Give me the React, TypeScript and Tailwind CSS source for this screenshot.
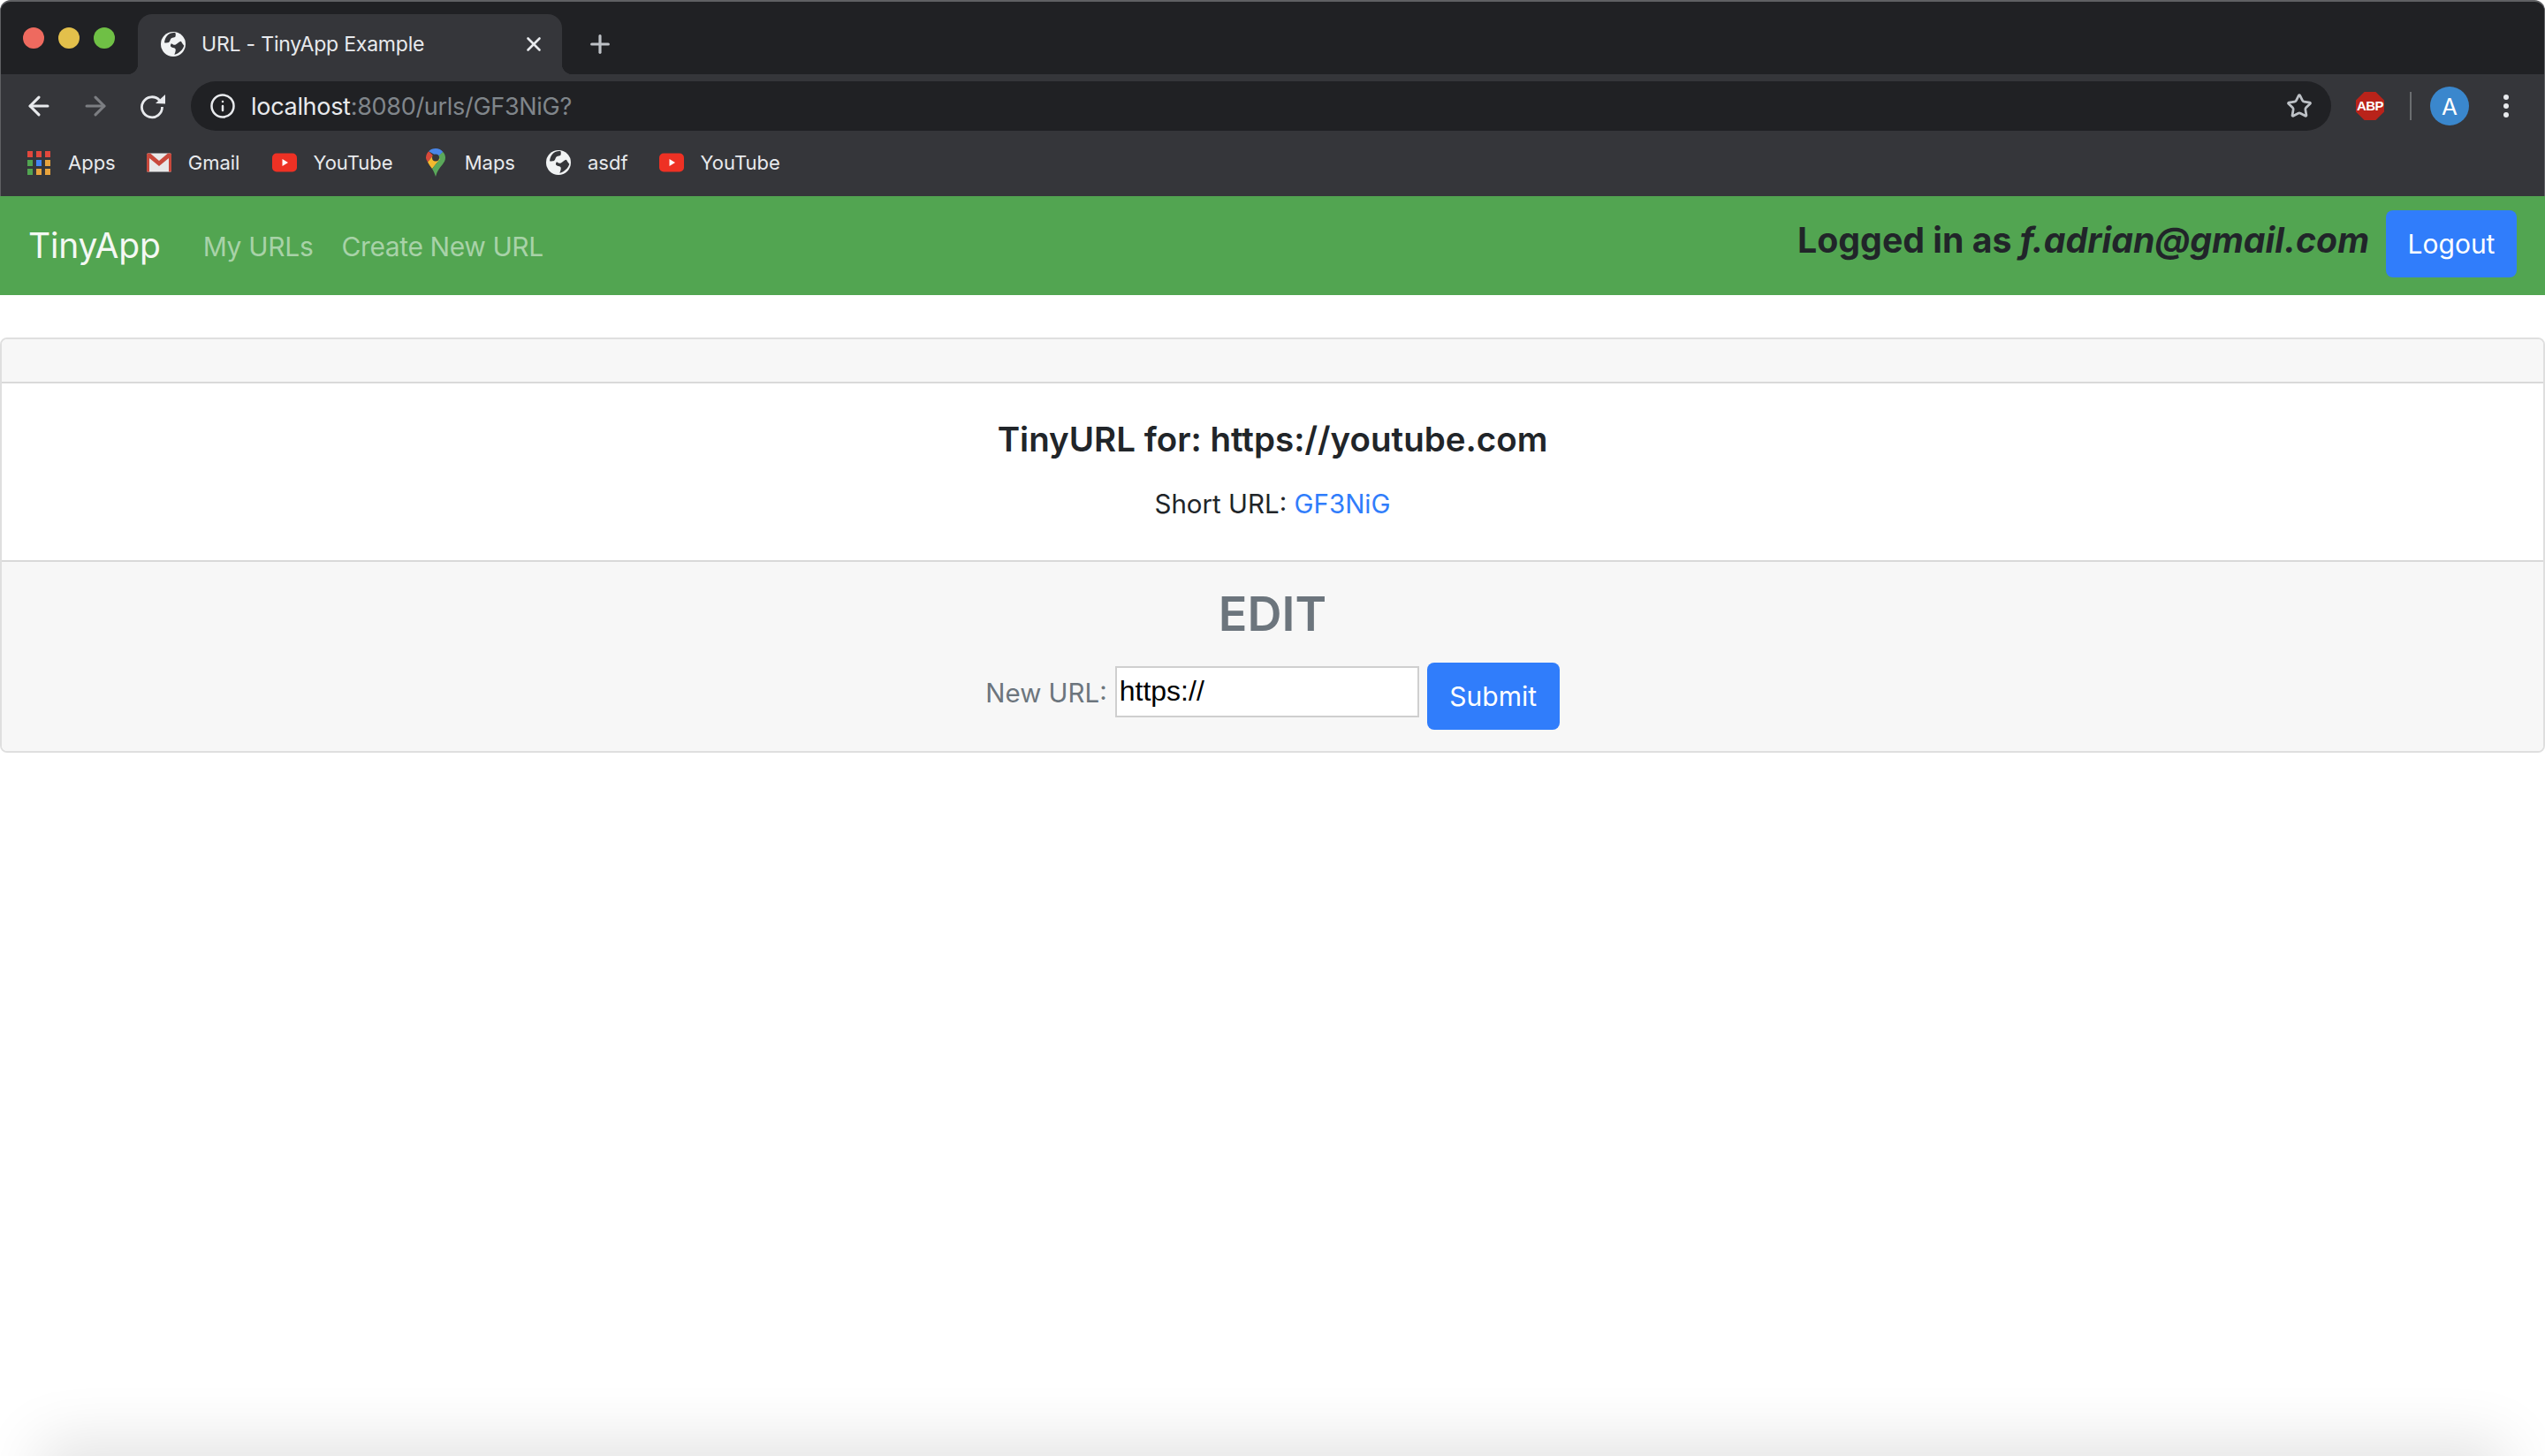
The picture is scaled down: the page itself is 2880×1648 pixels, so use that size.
import React from 'react';
import { ArrowLeft, ArrowRight, Info, Star, X, Plus } from 'lucide-react';

const Globe = () => (
  <svg width="28" height="28" viewBox="0 0 28 28" className="shrink-0">
    <circle cx="14" cy="14" r="14" fill="#f1f3f4" />
    <path d="M16.500 1.200C13 .6 10 1.800 8 3.400 5.800 5.500 4.300 8.500 4 12.300c2.300.4 4.800.2 5.700-1 1-1.500 1-3 2.300-4 1.200-.9 3.200-.6 4.300-1.600.6-1.200.6-3 .2-4.500z" fill="#35363a" />
    <path d="M23 10.700c-2.500.2-4.500 2.800-6.700 4-1.500.5-3-.5-4.300-1.400-1 1-1.300 2.500-.7 3.400 1.200 1.300 3.500 1 5 2.300 1 1.200.3 4.200-1 6.700 2-.3 3.500-.9 4.400-1.700 3.200-2 5.500-5 6.600-8.300-1.200-1.700-2.700-3.500-3.300-5z" fill="#35363a" />
  </svg>
);

const ReloadIcon = () => (
  <svg width="30" height="30" viewBox="0 0 30 30" className="shrink-0 text-[#e8eaed]">
    <path d="M22.500 8.500A11.500 11.500 0 1 0 25.500 16" fill="none" stroke="currentColor" strokeWidth="2.800" />
    <path d="M29 2v10.500L18 12z" fill="currentColor" />
  </svg>
);

const YouTubeIcon = () => (
  <svg width="28" height="22" viewBox="0 0 28 22" className="shrink-0">
    <rect width="28" height="21" y="0.500" rx="5" fill="#ee3124" />
    <path d="M11.500 7l6.500 4-6.500 4z" fill="#fff" />
  </svg>
);

const GmailIcon = () => (
  <svg width="28" height="22" viewBox="0 0 28 22" className="shrink-0">
    <rect width="28" height="21" y="0.500" rx="1.500" fill="#e8e8e8" />
    <path d="M0 2c0-1 .7-1.500 1.500-1.500H4L14 9 24 .5h2.500C27.300.5 28 1 28 2v18c0 1-.7 1.500-1.500 1.500H25V6l-11 9L3 6v15.500H1.500C.7 21.500 0 21 0 20z" fill="#c8493c" />
  </svg>
);

const MapsIcon = () => (
  <svg width="22" height="32" viewBox="0 0 22 32" className="shrink-0">
    <path d="M3.200 3.200L8 8l-6 7.500C.6 13 0 11.500 0 10.500 0 7.500 1.200 5 3.200 3.200z" fill="#d8493a" />
    <path d="M3.200 3.200C5.200 1.200 8 0 11 0c3.500 0 6.300 1.500 8.300 4L14 9.500 8 6z" fill="#4a86e8" />
    <path d="M19.300 4C21 6 22 8 22 10.500c0 3-1.500 5.500-3.500 8L9 13z" fill="#5aa85a" />
    <path d="M2 15.500L8 8l8 4-9 11c-2-2.700-3.800-5-5-7.500z" fill="#f3b92f" />
    <path d="M18.500 18.500C15.500 22 12.500 26 11 32c-1-3.500-2.300-6.300-4-9l8-10z" fill="#5aa85a" />
    <circle cx="11" cy="10.500" r="4" fill="#35363a" />
  </svg>
);

const AppsIcon = () => {
  const cells = ['#e2483d', '#e2483d', '#e2483d', '#52a551', '#4285f4', '#e8a33d', '#52a551', '#e8a33d', '#e8a33d'];
  return (
    <svg width="26" height="27" viewBox="0 0 26 27" className="shrink-0">
      {cells.map((c, i) => (
        <rect key={i} x={(i % 3) * 10} y={Math.floor(i / 3) * 10} width="6" height="7" fill={c} />
      ))}
    </svg>
  );
};

const AbpIcon = () => (
  <div
    className="w-8 h-8 bg-[#b9231a] flex items-center justify-center text-white text-[15px] font-bold tracking-[-0.5px] [font-family:'Liberation_Sans',sans-serif] [clip-path:polygon(30%_0,70%_0,100%_30%,100%_70%,70%_100%,30%_100%,0_70%,0_30%)]"
  >
    ABP
  </div>
);

const Bookmark = ({ icon, label, gap, after }: { icon: React.ReactNode; label: string; gap: string; after: string }) => (
  <div className={`flex items-center ${gap} ${after}`}>
    {icon}
    <span className="text-[22px] leading-none text-[#e8eaed]">{label}</span>
  </div>
);

export default function App() {
  return (
    <div className="relative w-[2880px] h-[1648px] overflow-hidden bg-white [font-family:Inter,'Liberation_Sans',sans-serif]">
      {/* browser chrome */}
      <div className="h-[222px] rounded-t-[12px] bg-[#35363a] border-t-2 border-x border-[#5f6063] overflow-hidden">
        <div className="h-[82px] bg-[#202124] flex items-start">
          <div className="w-[155px] h-full flex items-center gap-[16px] pl-[25px]">
            <div className="w-6 h-6 rounded-full bg-[#ee6a5f]" />
            <div className="w-6 h-6 rounded-full bg-[#e3c04b]" />
            <div className="w-6 h-6 rounded-full bg-[#6fc045]" />
          </div>
          <div className="relative mt-[14px] w-[480px] h-[68px] rounded-t-[16px] bg-[#35363a] flex items-center pl-[26px] pr-[19px]">
            <Globe />
            <span className="ml-[18px] text-[23px] text-[#e8eaed] leading-none tracking-[-0.2px] flex-1">URL - TinyApp Example</span>
            <X size={26} strokeWidth={2.400} className="text-[#e8eaed]" />
            <div className="absolute -left-[12px] bottom-0 w-[12px] h-[12px] bg-[radial-gradient(circle_at_0_0,#202124_12px,#35363a_12.500px)]" />
            <div className="absolute -right-[12px] bottom-0 w-[12px] h-[12px] bg-[radial-gradient(circle_at_100%_0,#202124_12px,#35363a_12.500px)]" />
          </div>
          <Plus size={32} strokeWidth={2.400} className="ml-[27px] mt-[32px] text-[#bdc1c6]" />
        </div>
        <div className="h-[72px] flex items-center pl-[26px] pr-[30px]">
          <ArrowLeft size={34} strokeWidth={2.200} className="text-[#e8eaed]" />
          <ArrowRight size={34} strokeWidth={2.200} className="ml-[30px] text-[#7c7e82]" />
          <div className="ml-[33px]"><ReloadIcon /></div>
          <div className="ml-[28px] w-[2422px] h-[56px] rounded-full bg-[#202124] flex items-center pl-[21px] pr-[21px]">
            <Info size={30} strokeWidth={2} className="text-[#e8eaed]" />
            <span className="ml-[17px] text-[27px] leading-none text-[#e8eaed] flex-1 tracking-[-0.3px]">
              localhost<span className="text-[#80868b]">:8080/urls/GF3NiG?</span>
            </span>
            <Star size={30} strokeWidth={2.200} className="text-[#bdc1c6]" />
          </div>
          <div className="ml-[28px]"><AbpIcon /></div>
          <div className="ml-[29px] w-[2px] h-8 bg-[#6b6d70]" />
          <div className="ml-[21px] w-11 h-11 rounded-full bg-[#3a87cd] flex items-center justify-center text-white text-[26px]">A</div>
          <div className="ml-[39px] flex flex-col gap-1">
            <div className="w-[6px] h-[6px] rounded-full bg-[#e8eaed]" />
            <div className="w-[6px] h-[6px] rounded-full bg-[#e8eaed]" />
            <div className="w-[6px] h-[6px] rounded-full bg-[#e8eaed]" />
          </div>
        </div>
        <div className="h-[66px] flex items-center pl-[30px] pb-[10px]">
          <Bookmark icon={<AppsIcon />} label="Apps" gap="gap-[20px]" after="mr-[35px]" />
          <Bookmark icon={<GmailIcon />} label="Gmail" gap="gap-[19px]" after="mr-[37px]" />
          <Bookmark icon={<YouTubeIcon />} label="YouTube" gap="gap-[18px]" after="mr-[37px]" />
          <Bookmark icon={<MapsIcon />} label="Maps" gap="gap-[22px]" after="mr-[35px]" />
          <Bookmark icon={<Globe />} label="asdf" gap="gap-[19px]" after="mr-[35px]" />
          <Bookmark icon={<YouTubeIcon />} label="YouTube" gap="gap-[19px]" after="" />
        </div>
      </div>

      {/* navbar */}
      <nav className="h-[112px] bg-[#52a551] flex items-center pl-[32px] pr-[32px]">
        <span className="text-[39px] text-[#f4f8f3] tracking-[-0.2px]">TinyApp</span>
        <span className="ml-[48px] mt-[2px] text-[30px] text-[#a8d2a8] tracking-[-0.3px]">My URLs</span>
        <span className="ml-[32px] mt-[2px] text-[30px] text-[#a8d2a8] tracking-[-0.4px]">Create New URL</span>
        <span className="ml-auto mb-[12px] text-[39.250px] font-bold text-[#212529]">
          Logged in as <em>f.adrian@gmail.com</em>
        </span>
        <button className="ml-[19px] mb-[4px] w-[148px] h-[76px] rounded-[8px] bg-[#307dfb] text-white text-[30px]">Logout</button>
      </nav>

      {/* card */}
      <div className="mt-[48px] rounded-[8px] border-2 border-[#dfdfdf]">
        <div className="h-[50px] bg-[#f7f7f7] rounded-t-[6px] border-b-2 border-[#d9d9d9]" />
        <div className="h-[200px] flex flex-col items-center pt-[39px] text-[#212529]">
          <h2 className="text-[38.500px] leading-[48px] font-semibold">TinyURL for: https://youtube.com</h2>
          <p className="mt-[26px] text-[29.500px] leading-[46px]">
            Short URL: <a className="text-[#307dfb]">GF3NiG</a>
          </p>
        </div>
        <div className="h-[216px] bg-[#f7f7f7] rounded-b-[6px] border-t-2 border-[#d9d9d9] flex flex-col items-center pt-[26px]">
          <h3 className="text-[54px] leading-[66px] font-semibold text-[#6c757d]">EDIT</h3>
          <form className="mt-[22px] flex items-center">
            <label className="text-[29.500px] text-[#6c757d] mb-[8px]">New URL:</label>
            <input
              readOnly
              value="https://"
              className="ml-[9px] mb-[11px] w-[344px] h-[58px] bg-white border-2 border-[#cfcfcf] pl-[3px] text-[32px] text-black [font-family:'Liberation_Sans',sans-serif]"
            />
            <button type="button" className="ml-[9px] w-[150px] h-[76px] rounded-[8px] bg-[#307dfb] text-white text-[30px]">Submit</button>
          </form>
        </div>
      </div>

      {/* window shadow from the next window below */}
      <div className="absolute left-[60px] right-[60px] -bottom-[50px] h-[50px] shadow-[0_0_70px_15px_rgba(0,0,0,0.12)]" />
    </div>
  );
}
